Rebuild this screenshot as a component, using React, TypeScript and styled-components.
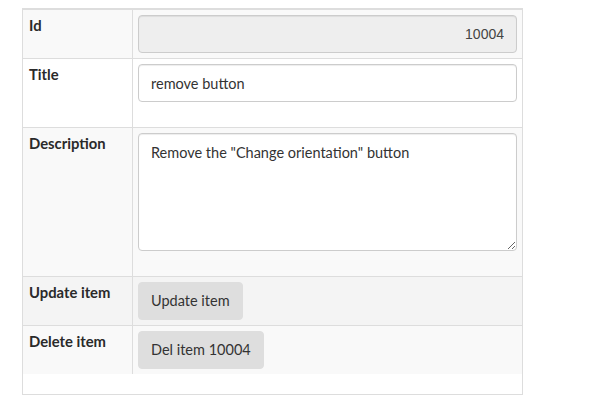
import React from "react";
import styled, { createGlobalStyle } from "styled-components";

const Global = createGlobalStyle`
  html, body { margin: 0; padding: 0; background: #fff; }
  body { font-family: Lato, "Open Sans", sans-serif; color: #333; font-size: 14px; line-height: 20px; }
`;

const Page = styled.div`
  padding: 8px 0 0 22px;
`;

const Box = styled.div`
  width: 499px;
  border: 1px solid #ddd;
  background: #fff;
  padding-bottom: 20px;
`;

const Table = styled.table`
  width: 100%;
  border-collapse: collapse;
  border-spacing: 0;
`;

const Row = styled.tr<{ $bg: string }>`
  background: ${(p) => p.$bg};
  & > td { border-top: 1px solid #ddd; vertical-align: top; }
`;

const Label = styled.td`
  width: 98px;
  padding: 5px 5px 5px 6px;
  font-weight: 700;
  font-size: 14.8px;
  line-height: 20px;
  color: #2a2a2a;
`;

const Value = styled.td`
  padding: 5px;
  border-left: 1px solid #ddd;
`;

const fieldBase = `
  display: block;
  box-sizing: border-box;
  width: 100%;
  border: 1px solid #ccc;
  border-radius: 4px;
  box-shadow: inset 0 1px 1px rgba(0,0,0,0.075);
  padding: 6px 12px;
  font-size: 14.5px;
  line-height: 20px;
  color: #555;
  margin: 0;
`;

const IdField = styled.input`
  ${fieldBase}
  height: 38px;
  background: #eee;
  text-align: right;
  font-family: "Liberation Sans", Arial, sans-serif;
  font-size: 14px;
  color: #444;
`;

const TextField = styled.input`
  ${fieldBase}
  height: 38px;
  background: #fff;
  font-family: Lato, sans-serif;
  color: #333;
  margin-bottom: 20px;
`;

const TextArea = styled.textarea`
  ${fieldBase}
  height: 118px;
  background: #fff;
  font-family: Lato, sans-serif;
  color: #333;
  padding: 9px 12px;
  margin-bottom: 20px;
  resize: vertical;
`;

const Button = styled.button`
  display: inline-block;
  height: 38px;
  padding: 6px 12px;
  border: 1px solid #dedede;
  border-radius: 4px;
  background: #dedede;
  color: #333;
  font-family: Lato, sans-serif;
  font-size: 14.5px;
  line-height: 20px;
  cursor: pointer;
`;

export default function App() {
  return (
    <>
      <Global />
      <Page>
        <Box>
          <Table>
            <tbody>
              <Row $bg="#f9f9f9">
                <Label>Id</Label>
                <Value>
                  <IdField readOnly value="10004" />
                </Value>
              </Row>
              <Row $bg="#fff">
                <Label>Title</Label>
                <Value>
                  <TextField defaultValue="remove button" />
                </Value>
              </Row>
              <Row $bg="#f9f9f9">
                <Label>Description</Label>
                <Value>
                  <TextArea defaultValue={'Remove the "Change orientation" button'} />
                </Value>
              </Row>
              <Row $bg="#f4f4f4">
                <Label>Update item</Label>
                <Value>
                  <Button>Update item</Button>
                </Value>
              </Row>
              <Row $bg="#f9f9f9">
                <Label>Delete item</Label>
                <Value>
                  <Button>Del item 10004</Button>
                </Value>
              </Row>
            </tbody>
          </Table>
        </Box>
      </Page>
    </>
  );
}
